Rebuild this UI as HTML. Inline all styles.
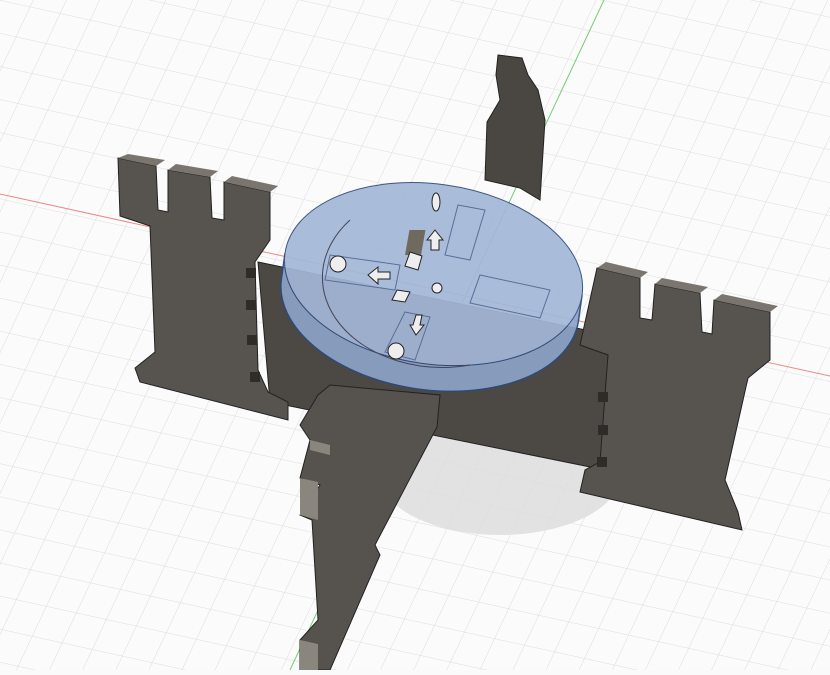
<!DOCTYPE html>
<html><head><style>html,body{margin:0;padding:0;background:#fafafa;overflow:hidden}</style></head>
<body>
<svg width="830" height="670" viewBox="0 0 830 670" xmlns="http://www.w3.org/2000/svg">
<defs>
<pattern id="g" width="30" height="30" patternUnits="userSpaceOnUse" patternTransform="matrix(1,0.22,-0.47,1,0,0)">
<path d="M0 0H30M0 0V30" stroke="#dcdcdc" stroke-width="1" fill="none"/>
</pattern>
</defs>
<rect width="830" height="670" fill="#fbfbfb"/>
<rect width="830" height="670" fill="url(#g)"/>
<line x1="0" y1="194" x2="830" y2="376" stroke="#e88" stroke-width="1"/>
<line x1="604" y1="0" x2="290" y2="670" stroke="#7c7" stroke-width="1"/>
<ellipse cx="500" cy="475" rx="120" ry="60" fill="#dcdcdc" opacity="0.8"/>
<polygon points="498,55 522,58 528,75 538,90 545,120 540,200 520,188 485,180 487,122 500,100 496,75" fill="#4a4743" stroke="#222" stroke-width="1"/>
<polygon points="258,262 610,335 605,470 270,402" fill="#4c4945" stroke="#222" stroke-width="1"/>
<polygon points="118,158 156,166 158,210 168,212 168,170 210,177 212,218 224,220 224,182 270,192 270,240 255,262 258,370 268,392 288,402 288,420 140,382 135,368 155,352 150,226 120,216" fill="#57534e" stroke="#222" stroke-width="1"/>
<polygon points="118,158 128,154 165,160 156,166" fill="#7a766f"/>
<polygon points="168,170 176,164 218,171 210,177" fill="#7a766f"/>
<polygon points="224,182 232,176 278,186 270,192" fill="#7a766f"/>
<g fill="#2e2c29"><rect x="246" y="268" width="10" height="10"/><rect x="246" y="300" width="10" height="10"/><rect x="247" y="335" width="10" height="10"/><rect x="250" y="372" width="10" height="10"/></g>
<polygon points="597,268 640,278 640,318 652,320 655,284 700,293 702,332 712,334 714,300 770,312 770,360 748,378 725,480 738,512 742,530 580,492 585,470 600,462 608,355 580,345" fill="#57534e" stroke="#222" stroke-width="1"/>
<polygon points="597,268 606,262 648,272 640,278" fill="#7a766f"/>
<polygon points="655,284 662,278 708,287 700,293" fill="#7a766f"/>
<polygon points="714,300 722,294 778,306 770,312" fill="#7a766f"/>
<g fill="#2e2c29"><rect x="598" y="392" width="10" height="10"/><rect x="598" y="425" width="10" height="10"/><rect x="597" y="457" width="10" height="10"/></g>
<polygon points="330,385 440,395 437,427 375,545 380,555 330,670 300,670 300,640 318,620 312,520 300,515 320,485 300,478 310,440 300,425 318,395" fill="#56524d" stroke="#222" stroke-width="1"/>
<polygon points="300,478 318,482 318,520 300,515" fill="#8a857d"/>
<polygon points="300,640 318,644 318,670 300,670" fill="#8a857d"/>
<polygon points="310,440 330,445 330,455 310,450" fill="#8a857d"/>
<!-- disk -->
<g transform="rotate(8,432,285)" opacity="0.92">
<ellipse cx="432" cy="300" rx="150" ry="90" fill="#8ca3c7" stroke="#2d4a7a" stroke-width="1.5"/>
<rect x="282" y="274" width="300" height="26" fill="#8ca3c7"/>
<line x1="282" y1="274" x2="282" y2="300" stroke="#2d4a7a" stroke-width="1.5"/>
<line x1="582" y1="274" x2="582" y2="300" stroke="#2d4a7a" stroke-width="1.5"/>
<ellipse cx="432" cy="274" rx="150" ry="90" fill="#a3b7d8" stroke="#2d4a7a" stroke-width="1"/>
</g>
<path d="M350 220 A120 90 0 0 0 470 365" fill="none" stroke="#445" stroke-width="1"/>
<g fill="none" stroke="#5a6f96"><polygon points="458,205 485,210 470,260 445,255"/><polygon points="330,255 400,265 395,290 325,280"/><polygon points="480,275 550,290 540,318 470,303"/><polygon points="405,312 430,317 415,360 385,352"/></g>
<rect x="450" y="230" width="16" height="25" fill="#6f6a5e" transform="skewX(-10)"/>
<g fill="#eee" stroke="#222" stroke-width="1">
<ellipse cx="436" cy="202" rx="4" ry="9"/>
<circle cx="338" cy="264" r="8"/><circle cx="396" cy="351" r="8"/><circle cx="437" cy="288" r="5"/>
<polygon points="410,252 422,256 418,270 405,266"/><polygon points="397,290 410,292 405,302 392,300"/>
<polygon points="435,230 443,240 439,240 439,250 431,250 431,240 427,240"/>
<polygon points="368,275 378,267 378,272 390,272 390,279 378,279 378,284"/>
<polygon points="416,335 424,325 420,325 422,315 416,315 413,325 410,325"/>
</g>
</svg>
</body></html>
